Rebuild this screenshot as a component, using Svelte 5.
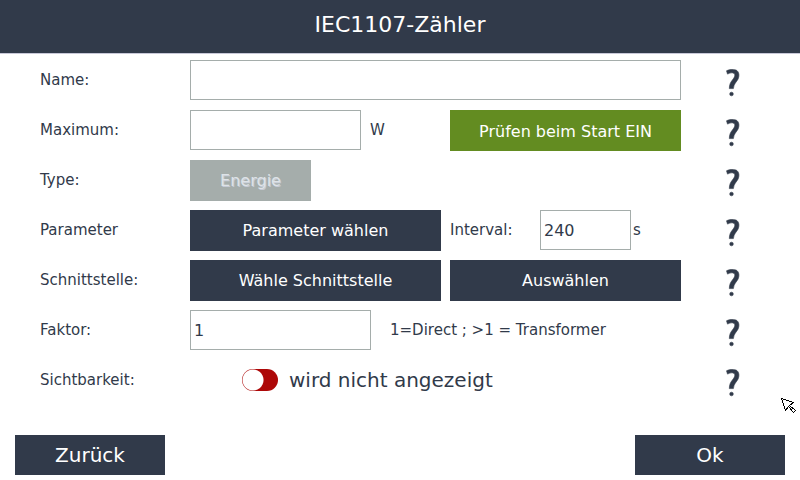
<script>
	let name = $state('');
	let maximum = $state('');
	let interval = $state('240');
	let factor = $state('1');
	let checkOnStart = $state(true);
	let visible = $state(false);
</script>

{#snippet help(topic)}
	<button type="button" class="help" aria-label="Hilfe: {topic}">
		<svg width="14" height="28" viewBox="0 0 14 28" aria-hidden="true">
			<path
				d="M.5 1.8C3 .4 7 0 10 1C13.4 2.6 13.5 7 12 10.2C10.5 13 7.8 14.8 7.4 19.6H3.3C3.3 15.5 4.5 13.5 6.4 11C8.4 8.5 9.6 6 8.1 4.5C6.5 3.2 4 3.9 1.5 5.1Z"
			/>
			<circle cx="5.5" cy="25" r="1.8" />
		</svg>
	</button>
{/snippet}

<div class="screen">
	<header>
		<h1>IEC1107-Zähler</h1>
	</header>

	<main>
		<div class="row">
			<label for="name">Name:</label>
			<input id="name" type="text" bind:value={name} />
			{@render help('Name')}
		</div>

		<div class="row">
			<label for="maximum">Maximum:</label>
			<div class="pair">
				<div class="group">
					<input id="maximum" class="maximum" type="text" bind:value={maximum} />
					<span class="unit">W</span>
				</div>
				<button
					type="button"
					class="action"
					class:on={checkOnStart}
					onclick={() => (checkOnStart = !checkOnStart)}
				>
					Prüfen beim Start {checkOnStart ? 'EIN' : 'AUS'}
				</button>
			</div>
			{@render help('Maximum')}
		</div>

		<div class="row">
			<span>Type:</span>
			<div class="group">
				<button type="button" class="action type" disabled>Energie</button>
			</div>
			{@render help('Type')}
		</div>

		<div class="row">
			<span>Parameter</span>
			<div class="pair">
				<button type="button" class="action">Parameter wählen</button>
				<div class="group">
					<label for="interval" class="interval-label">Interval:</label>
					<input id="interval" class="interval" type="text" bind:value={interval} />
					<span class="seconds">s</span>
				</div>
			</div>
			{@render help('Parameter')}
		</div>

		<div class="row">
			<span>Schnittstelle:</span>
			<div class="pair">
				<button type="button" class="action">Wähle Schnittstelle</button>
				<button type="button" class="action">Auswählen</button>
			</div>
			{@render help('Schnittstelle')}
		</div>

		<div class="row">
			<label for="factor">Faktor:</label>
			<div class="group">
				<input id="factor" class="factor" type="text" bind:value={factor} />
				<span class="hint">1=Direct ; &gt;1 = Transformer</span>
			</div>
			{@render help('Faktor')}
		</div>

		<div class="row">
			<span>Sichtbarkeit:</span>
			<label class="toggle">
				<input type="checkbox" bind:checked={visible} />
				<span>{visible ? 'wird angezeigt' : 'wird nicht angezeigt'}</span>
			</label>
			{@render help('Sichtbarkeit')}
		</div>
	</main>

	<footer>
		<button type="button">Zurück</button>
		<button type="button">Ok</button>
	</footer>

	<svg class="cursor" width="16" height="16" viewBox="0 0 16 16" aria-hidden="true">
		<path
			d="M.5 .5L12.5 4.5L8.5 7.5L14.5 12.5L12.5 14.5L7.5 8.5L4.5 12.5Z"
			fill="#fff"
			stroke="#000"
			shape-rendering="crispEdges"
		/>
	</svg>
</div>

<style>
	:global(body) {
		margin: 0;
		background: #fff;
	}

	.screen {
		position: relative;
		display: flex;
		flex-direction: column;
		min-height: 100vh;
		color: #313a4a;
		font-family: 'DejaVu Sans', sans-serif;
		font-size: 15px;
	}

	* {
		box-sizing: border-box;
	}

	header {
		padding: 9px 0 12px;
		background: #313a4a;
		border-bottom: 1px solid #c8c8d8;
		color: #fff;
		text-align: center;
	}

	h1 {
		margin: 0;
		font-size: 22px;
		font-weight: 400;
		line-height: 32px;
	}

	main {
		flex: 1;
		padding: 6px 16px 0 40px;
	}

	.row {
		display: grid;
		grid-template-columns: 150px minmax(0, 1fr) 103px;
		align-items: start;
		min-height: 50px;
		line-height: 40px;
	}

	.pair {
		display: grid;
		grid-template-columns: 251fr 231fr;
		gap: 9px;
	}

	.group {
		display: flex;
	}

	button,
	input {
		font-family: inherit;
		color: inherit;
	}

	button {
		border: none;
		border-radius: 0;
		padding: 0;
		cursor: pointer;
	}

	input[type='text'] {
		width: 100%;
		height: 40px;
		padding: 0 3px;
		background: #fff;
		border: 1px solid #a5adab;
		border-radius: 0;
		font-size: 16px;
	}

	input:focus {
		outline: none;
		border-color: #313a4a;
	}

	.group .maximum {
		width: 171px;
	}

	.group .interval {
		width: 91px;
	}

	.group .factor {
		width: 181px;
	}

	.unit {
		margin-left: 9px;
	}

	.interval-label {
		width: 90px;
	}

	.seconds {
		margin-left: 2px;
	}

	.hint {
		margin-left: 19px;
	}

	.action {
		height: 41px;
		background: #313a4a;
		color: #fff;
		font-size: 16px;
	}

	.action.on {
		background: #638c21;
		padding-top: 2px;
	}

	.type {
		width: 121px;
	}

	.type:disabled {
		background: #a5adab;
		color: #dee3e7;
		text-shadow: 1px 1px 0 #c6cbd6;
		cursor: default;
	}

	.help {
		display: flex;
		align-items: center;
		justify-content: center;
		justify-self: center;
		width: 40px;
		height: 45px;
		background: none;
	}

	.help svg {
		fill: currentColor;
		stroke: currentColor;
		stroke-width: 0.6;
	}

	.toggle {
		display: flex;
		align-items: center;
		gap: 11px;
		padding-left: 52px;
		font-size: 20px;
	}

	.toggle input {
		appearance: none;
		width: 36px;
		height: 22px;
		margin: 0;
		background: radial-gradient(circle at 11px 11px, #fff 10px, #ad0808 11px);
		border-radius: 11px;
		cursor: pointer;
	}

	.toggle input:checked {
		background: radial-gradient(circle at 25px 11px, #fff 10px, #638c21 11px);
	}

	footer {
		display: flex;
		justify-content: space-between;
		padding: 0 15px 5px;
	}

	footer button {
		width: 150px;
		height: 40px;
		background: #313a4a;
		color: #fff;
		font-size: 20px;
	}

	.cursor {
		position: absolute;
		top: 398px;
		right: 3px;
		pointer-events: none;
	}
</style>
